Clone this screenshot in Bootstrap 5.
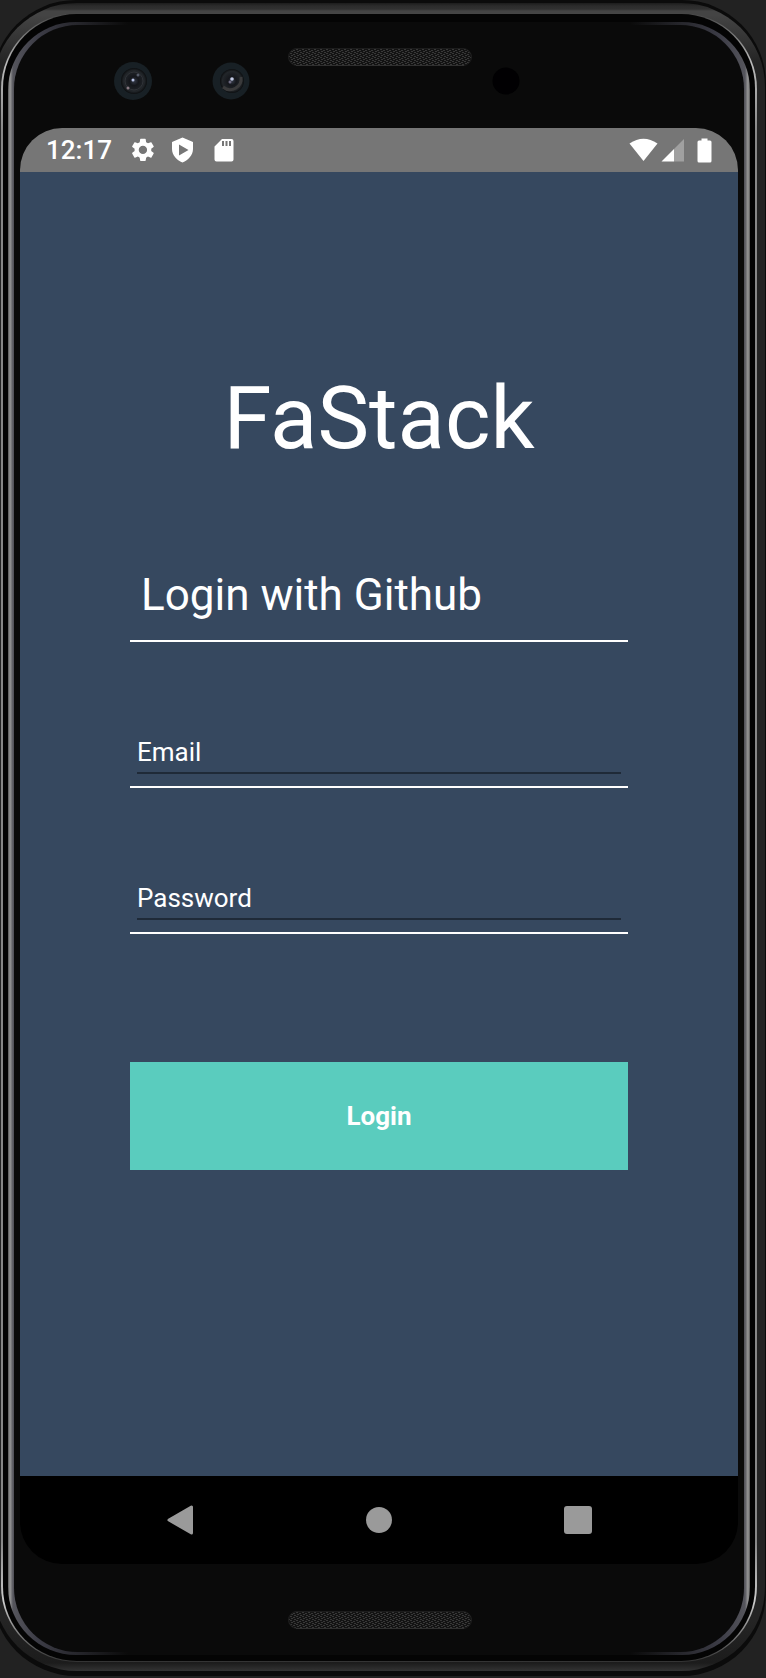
<!DOCTYPE html>
<html lang="en">
<head>
<meta charset="utf-8">
<meta name="viewport" content="width=device-width, initial-scale=1">
<title>FaStack</title>
<link href="https://cdn.jsdelivr.net/npm/bootstrap@5.3.0/dist/css/bootstrap.min.css" rel="stylesheet">
<style>
  body { background: #222; font-family: Roboto, "Liberation Sans", sans-serif; overflow-x: hidden; }
  svg { display: block; }

  /* Phone body, from the outer edge inwards */
  .phone { margin-left: -8px; padding: 3px 1px 5px; background: #0b0b0b; border-radius: 84px; }
  .shell { padding: 10px 8px 9px; border-radius: 84px;
    background: linear-gradient(#1c1c1c 0, #2c2c2c 3px, #303030 6px, #444 8px, #444 12px, #242424 60px, #242424 calc(100% - 50px), #1c1c1c calc(100% - 8px), #333 100%); }
  .rim { padding: 1px 2px; border-radius: 76px;
    background: linear-gradient(#444, #bbb 50px, #888 120px, #888 calc(100% - 120px), #ccc calc(100% - 60px), #333); }
  .groove { padding: 8px 5px 6px; border-radius: 74px; background: #040404; }
  .glass { padding: 3px 6px; border-radius: 68px;
    background: linear-gradient(90deg, #555 0, #999 2px, #55555c 5px, #3c3c46 30px, #0a0a0a 120px, #0a0a0a calc(100% - 120px), #3c3c46 calc(100% - 30px), #55555c calc(100% - 5px), #999 calc(100% - 2px), #555 100%); }
  .face { padding: 0 6px; border-radius: 64px; background: #0a0a0a; }

  .display-panel { border-radius: 42px; background: #000; }
  .status { height: 44px; padding: 0 26px; background: #767676; font-size: 26px; font-weight: 500; line-height: 44px; }
  .app { padding: 194px 110px 306px; background: #36485f; }
  .brand { margin: 0 0 99px; font-size: 87px; line-height: 104px; font-weight: 400; }
  .heading { margin: 0; padding: 0 11px 19px; border-bottom: 2px solid #fff; font-size: 44px; line-height: 52px; font-weight: 400; }
  /* The label shares the input's cell and gives way once text is typed */
  .field { margin-top: 92px; padding: 0 7px 12px; border-bottom: 2px solid #fff; }
  .field input, .field label { grid-area: 1 / 1; font-size: 26px; line-height: 36px; }
  .field label { pointer-events: none; }
  .field input { height: 40px; padding: 0 0 2px; border: 0; border-bottom: 2px solid #1f2a38; border-radius: 0; background: transparent; color: #fff; }
  .field input:focus { background: transparent; color: #fff; box-shadow: none; border-color: #1f2a38; }
  .field input:not(:placeholder-shown) + label { opacity: 0; }
  .login { margin-top: 128px; height: 108px; border: 0; border-radius: 0; background: #5accbe; color: #fff; font-size: 26px; font-weight: 700; }
  .login:hover { background: #4dbdaf; color: #fff; }
  .softkeys { height: 88px; padding: 0 62px; }
  .softkeys .btn { width: 196px; border: 0; }
</style>
</head>
<body>
<div class="phone"><div class="shell"><div class="rim"><div class="groove"><div class="glass"><div class="face overflow-hidden">

  <!-- Cameras, earpiece and sensor -->
  <svg class="w-100" viewBox="0 0 718 103" aria-hidden="true">
    <defs>
      <pattern id="mesh" width="6" height="4" patternUnits="userSpaceOnUse">
        <rect width="6" height="4" fill="#131313"/>
        <path d="M0 0h2v1H0zM3 1h2v1H3zM1 2h2v1H1zM4 3h2v1H4z" fill="#383838"/>
      </pattern>
      <radialGradient id="lens"><stop offset="0" stop-color="#343a48"/><stop offset=".35" stop-color="#15171c"/><stop offset=".8" stop-color="#22262a"/><stop offset="1" stop-color="#0c0e10"/></radialGradient>
    </defs>
    <circle cx="113" cy="56" r="19" fill="#182025"/><circle cx="114" cy="56" r="13" fill="url(#lens)"/>
    <circle cx="114" cy="56" r="9" fill="none" stroke="#303338"/>
    <circle cx="113" cy="55" r="1.500" fill="#b9c3e6"/><circle cx="108" cy="63" r="1.500" fill="#897a83"/><circle cx="118" cy="50" r="1.500" fill="#555b68"/>
    <circle cx="211" cy="56" r="18.500" fill="#182025"/><circle cx="212" cy="56" r="12" fill="url(#lens)"/>
    <path d="M203 62a11 11 0 0 0 18-10" fill="none" stroke="#3a3a3b" stroke-width="3"/>
    <circle cx="212" cy="54" r="1.800" fill="#c3cbe4"/><circle cx="210" cy="57" r="1.500" fill="#6d6a80"/>
    <rect x="268.500" y="23.500" width="183" height="17" rx="8.500" fill="url(#mesh)" stroke="#1d1d1d"/>
    <path d="M276 40.500h168" stroke="#303030"/>
    <circle cx="486" cy="56" r="13.500" fill="#010002"/>
  </svg>

  <div class="display-panel overflow-hidden">
    <div class="status d-flex align-items-center text-white">
      <span>12:17</span>
      <svg class="ms-3" width="43" height="28" viewBox="0 0 43 28" role="img" aria-label="Settings">
        <g transform="translate(1 0) scale(1.160)"><path fill="#fff" d="M19.140 12.940c.04-.3.06-.61.06-.94 0-.32-.02-.64-.07-.94l2.030-1.580c.18-.14.23-.41.12-.61l-1.920-3.320c-.12-.22-.37-.29-.59-.22l-2.390.96c-.5-.38-1.030-.7-1.620-.94L14.400 2.810c-.04-.24-.24-.41-.48-.41h-3.840c-.24 0-.43.17-.47.41L9.250 5.350C8.660 5.590 8.120 5.920 7.630 6.290L5.240 5.330c-.22-.08-.47 0-.59.22L2.740 8.870c-.12.21-.08.47.12.61l2.030 1.580C4.840 11.360 4.800 11.690 4.800 12s.02.640.07.940L2.840 14.520c-.18.14-.23.41-.12.61l1.920 3.320c.12.22.37.29.59.22l2.390-.96c.5.38 1.030.7 1.620.94l.36 2.540c.05.24.24.41.48.41h3.840c.24 0 .44-.17.47-.41l.36-2.540c.59-.24 1.130-.56 1.620-.94l2.390.96c.22.08.47 0 .59-.22l1.920-3.320c.12-.22.07-.47-.12-.61zM12 15.600A3.600 3.600 0 1 1 12 8.400a3.600 3.600 0 0 1 0 7.200z"/></g>
      </svg>
      <svg width="43" height="28" viewBox="0 0 43 28" role="img" aria-label="Play Protect">
        <path fill="#fff" fill-rule="evenodd" d="M11.500 1.500 22 6v7c0 6-4.500 11-10.500 13.500C5.500 24 1 19 1 13V6zM8 8.500v11L17.500 14z"/>
      </svg>
      <svg width="22" height="28" viewBox="0 0 22 28" role="img" aria-label="SD card">
        <path fill="#fff" fill-rule="evenodd" d="M8 3h9.500q2 0 2 2v18.500q0 2-2 2h-15q-2 0-2-2V10.500zM8 5v5h2V5zM11.500 5v5h2V5zM15 5v5h2V5z"/>
      </svg>
      <svg class="ms-auto" width="84" height="28" viewBox="0 0 84 28" role="img" aria-label="Wi-Fi, mobile signal and battery">
        <path fill="#fff" d="M1.500 7.500Q15.500-2 29.500 7.500L15.500 25z"/>
        <path fill="#a0a0a0" d="M56 3v22.500H46V13z"/><path fill="#fff" d="M46 13v12.500H33.500z"/>
        <path fill="#fff" d="M73.500 2.500h6v2H82q1.500 0 1.500 1.500v19q0 1.500-1.500 1.500H71q-1.500 0-1.500-1.500V6q0-1.500 1.500-1.500h2.500z"/>
      </svg>
    </div>

    <main class="app text-white">
      <h1 class="brand text-center">FaStack</h1>
      <form>
        <h2 class="heading">Login with Github</h2>
        <div class="field d-grid"><input class="form-control" id="email" type="email" placeholder=" "><label for="email">Email</label></div>
        <div class="field d-grid"><input class="form-control" id="password" type="password" placeholder=" "><label for="password">Password</label></div>
        <button class="login btn w-100" type="button">Login</button>
      </form>
    </main>

    <nav class="softkeys d-flex align-items-center justify-content-between" aria-label="System navigation">
      <button class="btn" type="button" aria-label="Back"><svg class="mx-auto" width="30" height="32" viewBox="0 0 30 32"><path d="M26.500 3v26L4 16z" fill="#9a9a9a" stroke="#9a9a9a" stroke-width="3" stroke-linejoin="round"/></svg></button>
      <button class="btn" type="button" aria-label="Home"><svg class="mx-auto" width="26" height="26"><circle cx="13" cy="13" r="13" fill="#9a9a9a"/></svg></button>
      <button class="btn" type="button" aria-label="Overview"><svg class="mx-auto" width="28" height="28"><rect width="28" height="28" rx="3" fill="#9a9a9a"/></svg></button>
    </nav>
  </div>

  <!-- Lower speaker -->
  <svg class="w-100" viewBox="0 0 718 88" aria-hidden="true">
    <rect x="268.500" y="47.500" width="183" height="17" rx="8.500" fill="url(#mesh)" stroke="#1d1d1d"/>
    <path d="M276 64.500h168" stroke="#303030"/>
  </svg>
</div></div></div></div></div></div>
<script src="https://cdn.jsdelivr.net/npm/bootstrap@5.3.0/dist/js/bootstrap.bundle.min.js"></script>
</body>
</html>
